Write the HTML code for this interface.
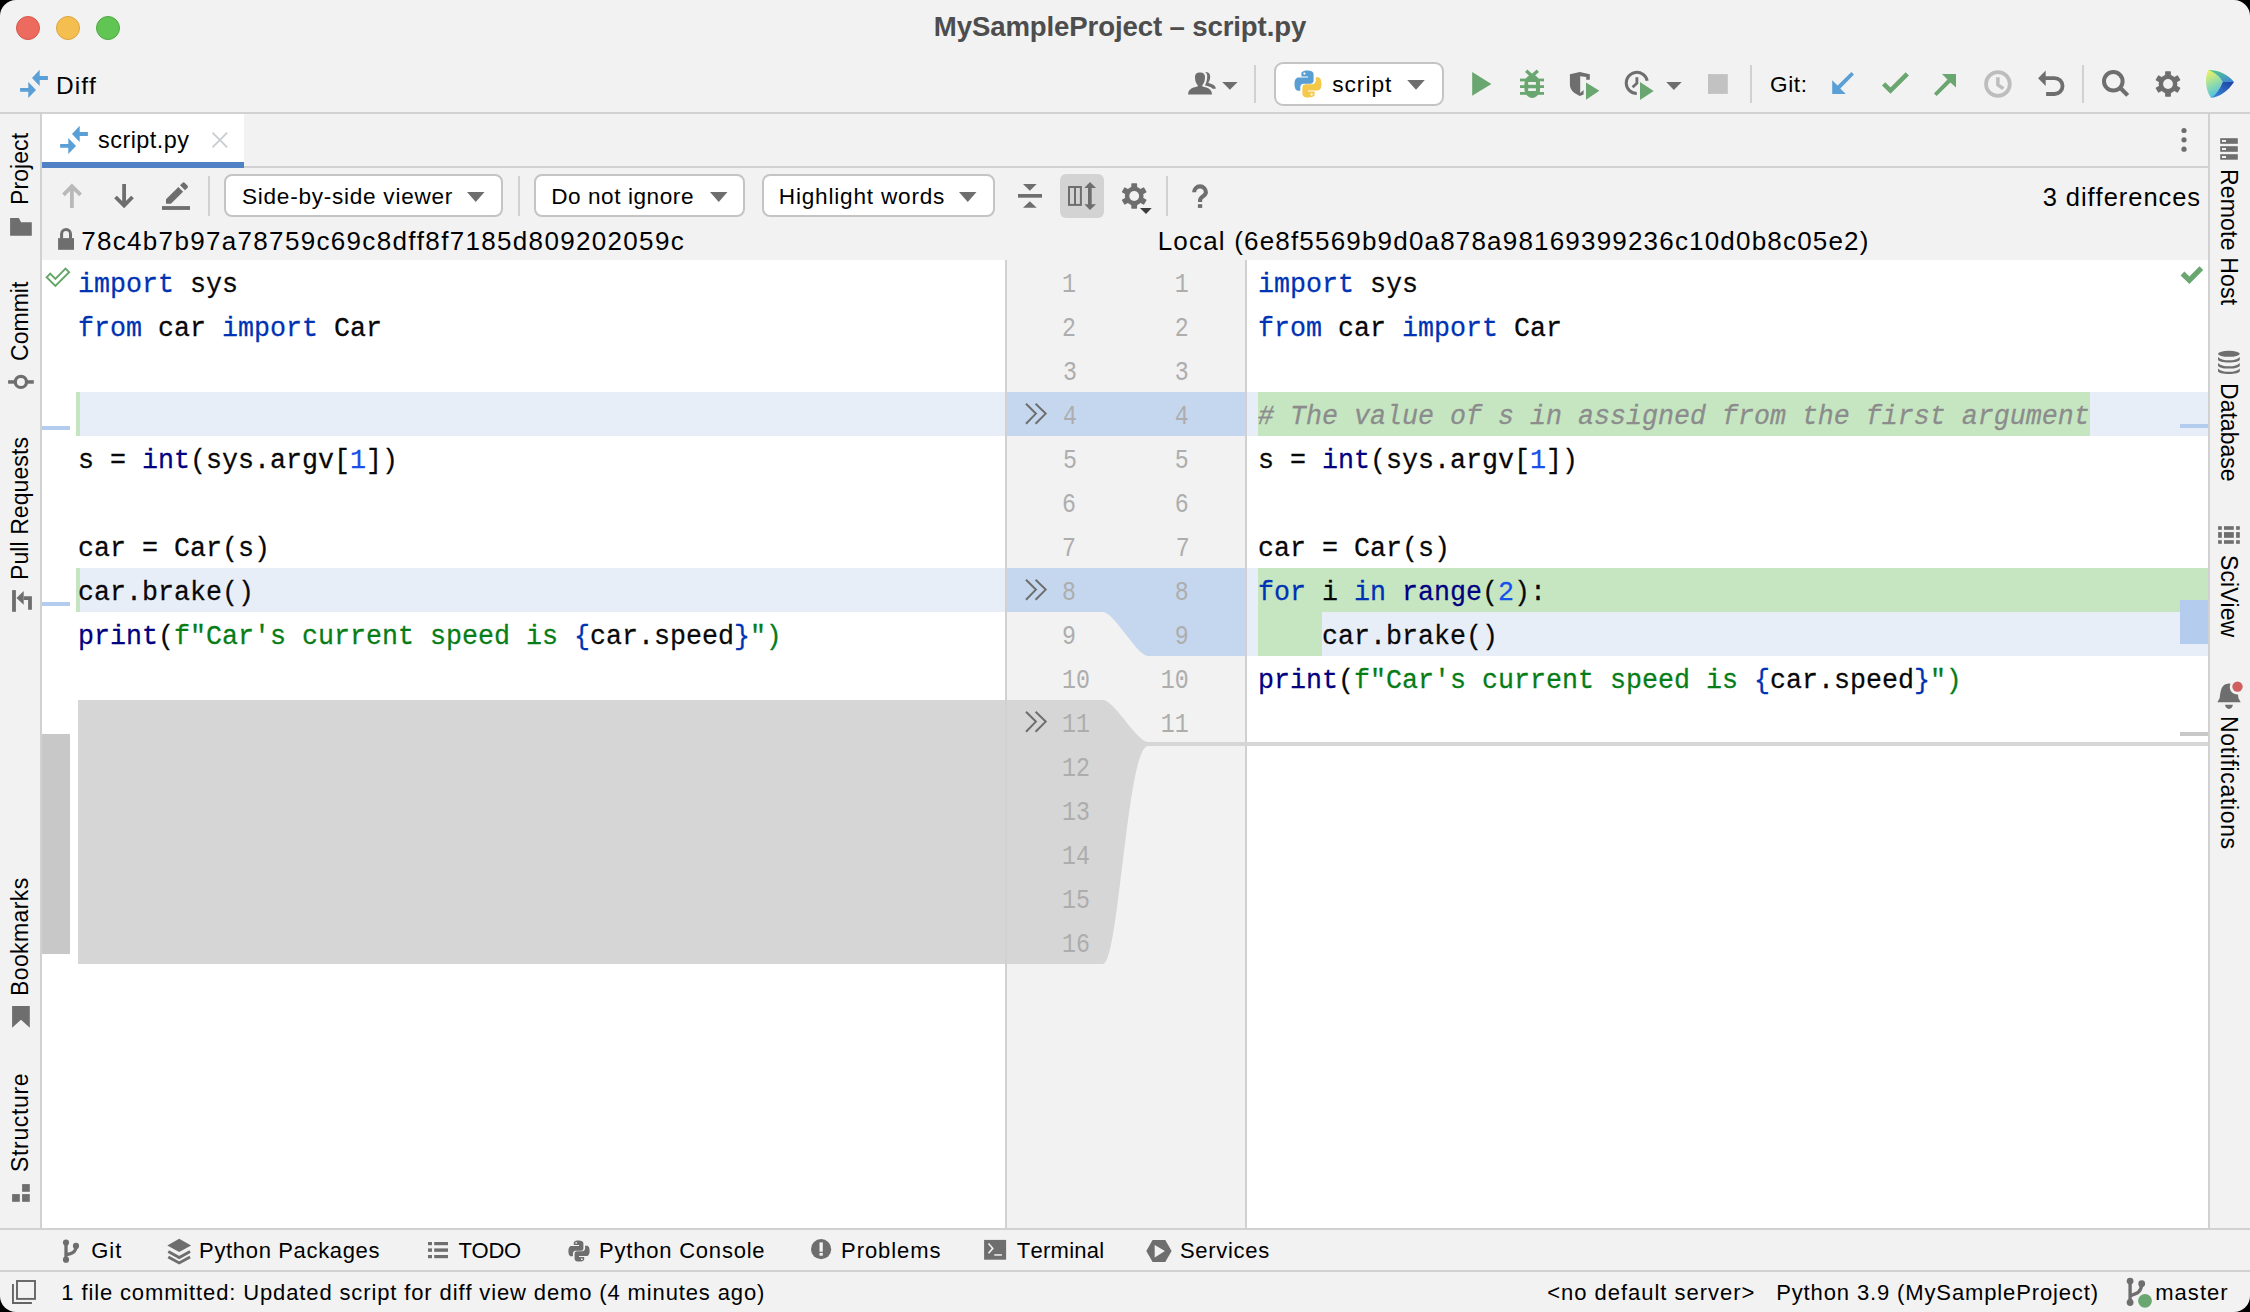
<!DOCTYPE html><html><head><meta charset="utf-8"><style>
html,body{margin:0;padding:0;background:#000;width:2250px;height:1312px;overflow:hidden}
#w{position:absolute;left:0;top:0;width:2250px;height:1312px;background:#f2f2f2;border-radius:16px;overflow:hidden}
.t{position:absolute;line-height:0;white-space:pre;font-family:"Liberation Sans",sans-serif;font-kerning:none;font-variant-ligatures:none}
.r{position:absolute}
.code{transform:scaleY(1.05);transform-origin:0 7.1px;-webkit-text-stroke:0.25px currentColor}
</style></head><body><div id="w">
<svg class="r" style="left:15px;top:15px" width="26" height="26" viewBox="0 0 26 26"><circle cx="13" cy="13" r="11.5" fill="#ed6a5e" stroke="#d4574b" stroke-width="1"/></svg>
<svg class="r" style="left:55px;top:15px" width="26" height="26" viewBox="0 0 26 26"><circle cx="13" cy="13" r="11.5" fill="#f5bf4f" stroke="#d9a540" stroke-width="1"/></svg>
<svg class="r" style="left:95px;top:15px" width="26" height="26" viewBox="0 0 26 26"><circle cx="13" cy="13" r="11.5" fill="#61c554" stroke="#4fa843" stroke-width="1"/></svg>
<div class="t" style="left:933.85px;top:27.00px;font-size:27.6px;color:#4d4d4d;font-weight:700;letter-spacing:-0.127px;">MySampleProject – script.py</div>
<div class="r" style="left:0px;top:112px;width:2250px;height:2px;background:#d1d1d1;"></div>
<div class="t" style="left:55.99px;top:86.00px;font-size:24.5px;color:#000;letter-spacing:1.008px;">Diff</div>
<div class="t" style="left:1769.96px;top:85.00px;font-size:22.6px;color:#000;letter-spacing:0.647px;">Git:</div>
<div class="r" style="left:1274px;top:62px;width:166px;height:40px;border:2px solid #c4c4c4;border-radius:9px;background:#fff"></div>
<div class="t" style="left:1332.17px;top:84.00px;font-size:22.8px;color:#000;letter-spacing:0.946px;">script</div>
<div class="r" style="left:40px;top:114px;width:2px;height:1114px;background:#d1d1d1;"></div>
<div class="r" style="left:2208px;top:114px;width:2px;height:1114px;background:#d1d1d1;"></div>
<div class="r" style="left:42px;top:114px;width:202px;height:52px;background:#fff;"></div>
<div class="r" style="left:42px;top:166px;width:2166px;height:2px;background:#d1d1d1;"></div>
<div class="r" style="left:42px;top:162px;width:202px;height:6px;background:#4f81c4;"></div>
<div class="t" style="left:98.05px;top:140.00px;font-size:23.4px;color:#000;letter-spacing:0.484px;">script.py</div>
<div class="r" style="left:224px;top:174px;width:275px;height:39px;border:2px solid #c4c4c4;border-radius:8px;background:#fff"></div>
<div class="t" style="left:241.97px;top:197.00px;font-size:22.6px;color:#000;letter-spacing:0.734px;">Side-by-side viewer</div>
<div class="r" style="left:534px;top:174px;width:207px;height:39px;border:2px solid #c4c4c4;border-radius:8px;background:#fff"></div>
<div class="t" style="left:551.15px;top:197.00px;font-size:22.6px;color:#000;letter-spacing:0.556px;">Do not ignore</div>
<div class="r" style="left:762px;top:174px;width:229px;height:39px;border:2px solid #c4c4c4;border-radius:8px;background:#fff"></div>
<div class="t" style="left:778.85px;top:197.00px;font-size:22.6px;color:#000;letter-spacing:0.791px;">Highlight words</div>
<div class="t" style="left:2042.63px;top:197.00px;font-size:25.5px;color:#000;letter-spacing:0.958px;">3 differences</div>
<div class="t" style="left:81.17px;top:241.00px;font-size:26px;color:#000;letter-spacing:1.325px;">78c4b7b97a78759c69c8dff8f7185d809202059c</div>
<div class="t" style="left:1157.67px;top:241.00px;font-size:26px;color:#000;letter-spacing:1.187px;">Local (6e8f5569b9d0a878a98169399236c10d0b8c05e2)</div>
<div class="r" style="left:42px;top:260px;width:963px;height:968px;background:#fff;"></div>
<div class="r" style="left:1005px;top:260px;width:2px;height:968px;background:#d1d1d1;"></div>
<div class="r" style="left:1007px;top:260px;width:238px;height:968px;background:#f2f2f2;"></div>
<div class="r" style="left:1245px;top:260px;width:2px;height:968px;background:#d1d1d1;"></div>
<div class="r" style="left:1247px;top:260px;width:961px;height:968px;background:#fff;"></div>
<div class="r" style="left:0px;top:1228px;width:2250px;height:2px;background:#d1d1d1;"></div>
<div class="r" style="left:0px;top:1270px;width:2250px;height:2px;background:#d1d1d1;"></div>
<div class="t" style="left:91.29px;top:1251.00px;font-size:22px;color:#000;letter-spacing:0.978px;">Git</div>
<div class="t" style="left:199.10px;top:1251.00px;font-size:22px;color:#000;letter-spacing:0.656px;">Python Packages</div>
<div class="t" style="left:458.51px;top:1251.00px;font-size:22px;color:#000;letter-spacing:-0.335px;">TODO</div>
<div class="t" style="left:599.10px;top:1251.00px;font-size:22px;color:#000;letter-spacing:0.782px;">Python Console</div>
<div class="t" style="left:841.10px;top:1251.00px;font-size:22px;color:#000;letter-spacing:0.911px;">Problems</div>
<div class="t" style="left:1016.81px;top:1251.00px;font-size:22px;color:#000;letter-spacing:0.256px;">Terminal</div>
<div class="t" style="left:1180.00px;top:1251.00px;font-size:22px;color:#000;letter-spacing:0.691px;">Services</div>
<div class="t" style="left:61.32px;top:1293.00px;font-size:22px;color:#000;letter-spacing:0.870px;">1 file committed: Updated script for diff view demo (4 minutes ago)</div>
<div class="t" style="left:1547.22px;top:1293.00px;font-size:22px;color:#000;letter-spacing:0.977px;">&lt;no default server&gt;</div>
<div class="t" style="left:1776.20px;top:1293.00px;font-size:22px;color:#000;letter-spacing:0.871px;">Python 3.9 (MySampleProject)</div>
<div class="t" style="left:2155.24px;top:1293.00px;font-size:22px;color:#000;letter-spacing:1.038px;">master</div>
<div class="t" style="left:20.23px;top:204.89px;transform:rotate(-90deg);transform-origin:0 0;font-size:23px;color:#000;letter-spacing:0.079px;">Project</div>
<div class="t" style="left:20.23px;top:361.17px;transform:rotate(-90deg);transform-origin:0 0;font-size:23px;color:#000;letter-spacing:0.023px;">Commit</div>
<div class="t" style="left:20.23px;top:580.39px;transform:rotate(-90deg);transform-origin:0 0;font-size:23px;color:#000;letter-spacing:0.084px;">Pull Requests</div>
<div class="t" style="left:20.23px;top:996.39px;transform:rotate(-90deg);transform-origin:0 0;font-size:23px;color:#000;letter-spacing:0.398px;">Bookmarks</div>
<div class="t" style="left:20.23px;top:1171.64px;transform:rotate(-90deg);transform-origin:0 0;font-size:23px;color:#000;letter-spacing:0.669px;">Structure</div>
<div class="t" style="left:2229.37px;top:169.41px;transform:rotate(90deg);transform-origin:0 0;font-size:23px;color:#000;letter-spacing:0.184px;">Remote Host</div>
<div class="t" style="left:2229.37px;top:383.31px;transform:rotate(90deg);transform-origin:0 0;font-size:23px;color:#000;letter-spacing:0.022px;">Database</div>
<div class="t" style="left:2229.37px;top:555.46px;transform:rotate(90deg);transform-origin:0 0;font-size:23px;color:#000;letter-spacing:0.064px;">SciView</div>
<div class="t" style="left:2229.37px;top:715.51px;transform:rotate(90deg);transform-origin:0 0;font-size:23px;color:#000;letter-spacing:0.653px;">Notifications</div>
<div class="r" style="left:80px;top:392px;width:925px;height:44px;background:#e8eef8;"></div>
<div class="r" style="left:76px;top:392px;width:4px;height:44px;background:#c5e5c0;"></div>
<div class="r" style="left:80px;top:568px;width:925px;height:44px;background:#e8eef8;"></div>
<div class="r" style="left:76px;top:568px;width:4px;height:44px;background:#c5e5c0;"></div>
<div class="r" style="left:78px;top:700px;width:927px;height:264px;background:#d6d6d6;"></div>
<div class="r" style="left:42px;top:734px;width:28px;height:220px;background:#c8c8c8;"></div>
<div class="r" style="left:42px;top:426px;width:28px;height:4px;background:#b4cdee;"></div>
<div class="r" style="left:42px;top:602px;width:28px;height:4px;background:#b4cdee;"></div>
<svg class="r" style="left:1007px;top:380px" width="238" height="600" viewBox="0 0 238 600">
<rect x="0" y="12" width="238" height="44" fill="#c5d7ef"/>
<path d="M0 188 H238 V276 H141 C130 276 107 232 96 232 H0 Z" fill="#c5d7ef"/>
<path d="M-2 320 H96 C107 320 130 362 141 362 V366 C120 366 112 584 96 584 H-2 Z" fill="#d6d6d6"/>
</svg>
<div class="r" style="left:1247px;top:392px;width:961px;height:44px;background:#e8eef8;"></div>
<div class="r" style="left:1258px;top:392px;width:832px;height:44px;background:#c6e6c2;"></div>
<div class="r" style="left:1247px;top:568px;width:961px;height:88px;background:#e8eef8;"></div>
<div class="r" style="left:1258px;top:568px;width:950px;height:44px;background:#c6e6c2;"></div>
<div class="r" style="left:1258px;top:612px;width:64px;height:44px;background:#c6e6c2;"></div>
<div class="r" style="left:1148px;top:742px;width:1060px;height:4px;background:#d6d6d6;"></div>
<div class="r" style="left:2180px;top:424px;width:28px;height:4px;background:#b4cdee;"></div>
<div class="r" style="left:2180px;top:600px;width:28px;height:44px;background:#b4cdee;"></div>
<div class="r" style="left:2180px;top:732px;width:28px;height:4px;background:#c8c8c8;"></div>
<div class="t code" style="left:78px;top:285.00px;font-family:'Liberation Mono', monospace;font-size:26.67px"><span style="color:#0033b3;">import</span><span style="color:#080808;"> sys</span></div>
<div class="t code" style="left:78px;top:329.00px;font-family:'Liberation Mono', monospace;font-size:26.67px"><span style="color:#0033b3;">from</span><span style="color:#080808;"> car </span><span style="color:#0033b3;">import</span><span style="color:#080808;"> Car</span></div>
<div class="t code" style="left:78px;top:461.00px;font-family:'Liberation Mono', monospace;font-size:26.67px"><span style="color:#080808;">s = </span><span style="color:#000080;">int</span><span style="color:#080808;">(sys.argv[</span><span style="color:#1750eb;">1</span><span style="color:#080808;">])</span></div>
<div class="t code" style="left:78px;top:549.00px;font-family:'Liberation Mono', monospace;font-size:26.67px"><span style="color:#080808;">car = Car(s)</span></div>
<div class="t code" style="left:78px;top:593.00px;font-family:'Liberation Mono', monospace;font-size:26.67px"><span style="color:#080808;">car.brake()</span></div>
<div class="t code" style="left:78px;top:637.00px;font-family:'Liberation Mono', monospace;font-size:26.67px"><span style="color:#000080;">print</span><span style="color:#080808;">(</span><span style="color:#067d17;">f"Car's current speed is </span><span style="color:#0033b3;">{</span><span style="color:#080808;">car.speed</span><span style="color:#0033b3;">}</span><span style="color:#067d17;">")</span></div>
<div class="t code" style="left:1258px;top:285.00px;font-family:'Liberation Mono', monospace;font-size:26.67px"><span style="color:#0033b3;">import</span><span style="color:#080808;"> sys</span></div>
<div class="t code" style="left:1258px;top:329.00px;font-family:'Liberation Mono', monospace;font-size:26.67px"><span style="color:#0033b3;">from</span><span style="color:#080808;"> car </span><span style="color:#0033b3;">import</span><span style="color:#080808;"> Car</span></div>
<div class="t code" style="left:1258px;top:417.00px;font-family:'Liberation Mono', monospace;font-size:26.67px"><span style="color:#8c8c8c;font-style:italic"># The value of s in assigned from the first argument</span></div>
<div class="t code" style="left:1258px;top:461.00px;font-family:'Liberation Mono', monospace;font-size:26.67px"><span style="color:#080808;">s = </span><span style="color:#000080;">int</span><span style="color:#080808;">(sys.argv[</span><span style="color:#1750eb;">1</span><span style="color:#080808;">])</span></div>
<div class="t code" style="left:1258px;top:549.00px;font-family:'Liberation Mono', monospace;font-size:26.67px"><span style="color:#080808;">car = Car(s)</span></div>
<div class="t code" style="left:1258px;top:593.00px;font-family:'Liberation Mono', monospace;font-size:26.67px"><span style="color:#0033b3;">for</span><span style="color:#080808;"> i </span><span style="color:#0033b3;">in</span><span style="color:#080808;"> </span><span style="color:#000080;">range</span><span style="color:#080808;">(</span><span style="color:#1750eb;">2</span><span style="color:#080808;">):</span></div>
<div class="t code" style="left:1258px;top:637.00px;font-family:'Liberation Mono', monospace;font-size:26.67px"><span style="color:#080808;">    car.brake()</span></div>
<div class="t code" style="left:1258px;top:681.00px;font-family:'Liberation Mono', monospace;font-size:26.67px"><span style="color:#000080;">print</span><span style="color:#080808;">(</span><span style="color:#067d17;">f"Car's current speed is </span><span style="color:#0033b3;">{</span><span style="color:#080808;">car.speed</span><span style="color:#0033b3;">}</span><span style="color:#067d17;">")</span></div>
<div class="t" style="left:1062.32px;top:285.00px;font-family:'Liberation Mono', monospace;font-size:28px;color:#adadad;transform:scaleX(0.83);transform-origin:0 0">1</div>
<div class="t" style="left:1062.37px;top:329.00px;font-family:'Liberation Mono', monospace;font-size:28px;color:#adadad;transform:scaleX(0.83);transform-origin:0 0">2</div>
<div class="t" style="left:1062.55px;top:373.00px;font-family:'Liberation Mono', monospace;font-size:28px;color:#adadad;transform:scaleX(0.83);transform-origin:0 0">3</div>
<div class="t" style="left:1062.83px;top:417.00px;font-family:'Liberation Mono', monospace;font-size:28px;color:#adadad;transform:scaleX(0.83);transform-origin:0 0">4</div>
<div class="t" style="left:1062.55px;top:461.00px;font-family:'Liberation Mono', monospace;font-size:28px;color:#adadad;transform:scaleX(0.83);transform-origin:0 0">5</div>
<div class="t" style="left:1062.29px;top:505.00px;font-family:'Liberation Mono', monospace;font-size:28px;color:#adadad;transform:scaleX(0.83);transform-origin:0 0">6</div>
<div class="t" style="left:1062.21px;top:549.00px;font-family:'Liberation Mono', monospace;font-size:28px;color:#adadad;transform:scaleX(0.83);transform-origin:0 0">7</div>
<div class="t" style="left:1062.49px;top:593.00px;font-family:'Liberation Mono', monospace;font-size:28px;color:#adadad;transform:scaleX(0.83);transform-origin:0 0">8</div>
<div class="t" style="left:1062.40px;top:637.00px;font-family:'Liberation Mono', monospace;font-size:28px;color:#adadad;transform:scaleX(0.83);transform-origin:0 0">9</div>
<div class="t" style="left:1062.32px;top:681.00px;font-family:'Liberation Mono', monospace;font-size:28px;color:#adadad;transform:scaleX(0.83);transform-origin:0 0">10</div>
<div class="t" style="left:1062.32px;top:725.00px;font-family:'Liberation Mono', monospace;font-size:28px;color:#adadad;transform:scaleX(0.83);transform-origin:0 0">11</div>
<div class="t" style="left:1062.32px;top:769.00px;font-family:'Liberation Mono', monospace;font-size:28px;color:#adadad;transform:scaleX(0.83);transform-origin:0 0">12</div>
<div class="t" style="left:1062.32px;top:813.00px;font-family:'Liberation Mono', monospace;font-size:28px;color:#adadad;transform:scaleX(0.83);transform-origin:0 0">13</div>
<div class="t" style="left:1062.32px;top:857.00px;font-family:'Liberation Mono', monospace;font-size:28px;color:#adadad;transform:scaleX(0.83);transform-origin:0 0">14</div>
<div class="t" style="left:1062.32px;top:901.00px;font-family:'Liberation Mono', monospace;font-size:28px;color:#adadad;transform:scaleX(0.83);transform-origin:0 0">15</div>
<div class="t" style="left:1062.32px;top:945.00px;font-family:'Liberation Mono', monospace;font-size:28px;color:#adadad;transform:scaleX(0.83);transform-origin:0 0">16</div>
<div class="t" style="left:1171.82px;top:285.00px;font-family:'Liberation Mono', monospace;font-size:28px;color:#adadad;transform:scaleX(0.83);transform-origin:100% 0">1</div>
<div class="t" style="left:1172.34px;top:329.00px;font-family:'Liberation Mono', monospace;font-size:28px;color:#adadad;transform:scaleX(0.83);transform-origin:100% 0">2</div>
<div class="t" style="left:1172.17px;top:373.00px;font-family:'Liberation Mono', monospace;font-size:28px;color:#adadad;transform:scaleX(0.83);transform-origin:100% 0">3</div>
<div class="t" style="left:1171.88px;top:417.00px;font-family:'Liberation Mono', monospace;font-size:28px;color:#adadad;transform:scaleX(0.83);transform-origin:100% 0">4</div>
<div class="t" style="left:1172.17px;top:461.00px;font-family:'Liberation Mono', monospace;font-size:28px;color:#adadad;transform:scaleX(0.83);transform-origin:100% 0">5</div>
<div class="t" style="left:1172.21px;top:505.00px;font-family:'Liberation Mono', monospace;font-size:28px;color:#adadad;transform:scaleX(0.83);transform-origin:100% 0">6</div>
<div class="t" style="left:1172.51px;top:549.00px;font-family:'Liberation Mono', monospace;font-size:28px;color:#adadad;transform:scaleX(0.83);transform-origin:100% 0">7</div>
<div class="t" style="left:1172.23px;top:593.00px;font-family:'Liberation Mono', monospace;font-size:28px;color:#adadad;transform:scaleX(0.83);transform-origin:100% 0">8</div>
<div class="t" style="left:1172.31px;top:637.00px;font-family:'Liberation Mono', monospace;font-size:28px;color:#adadad;transform:scaleX(0.83);transform-origin:100% 0">9</div>
<div class="t" style="left:1155.32px;top:681.00px;font-family:'Liberation Mono', monospace;font-size:28px;color:#adadad;transform:scaleX(0.83);transform-origin:100% 0">10</div>
<div class="t" style="left:1155.02px;top:725.00px;font-family:'Liberation Mono', monospace;font-size:28px;color:#adadad;transform:scaleX(0.83);transform-origin:100% 0">11</div>
<svg class="r" style="left:15px;top:66px;overflow:visible" width="36" height="36"><path fill="#5a9fd5" d="M17 11.9 L24.7 3.8 V10 H32.9 V13.9 H24.7 V19.9 Z M21 23.9 L13.3 15.9 V22 H5.1 V25.8 H13.3 V32 Z"/></svg>
<svg class="r" style="left:55px;top:122px;overflow:visible" width="36" height="36"><path fill="#5a9fd5" d="M17 11.9 L24.7 3.8 V10 H32.9 V13.9 H24.7 V19.9 Z M21 23.9 L13.3 15.9 V22 H5.1 V25.8 H13.3 V32 Z"/></svg>
<svg class="r" style="left:210px;top:130px;overflow:visible" width="20" height="20"><path d="M2.5 2.7 L17.2 17.3 M17.2 2.7 L2.5 17.3" stroke="#c9cdd0" stroke-width="1.8"/></svg>
<svg class="r" style="left:1180px;top:64px;overflow:visible" width="64" height="40"><g fill="#6e6e6e">
<path d="M8.1 30.6 C8.1 25.5 12 23.5 17.5 22.6 L17.8 21.2 C15.6 19.2 15 16 15 13 C15 9.7 17 8.4 20 8.4 C23 8.4 25 9.7 25 13 C25 16 24.4 19.2 22.2 21.2 L22.5 22.6 C28 23.5 32 25.5 32 30.6 Z"/>
<path d="M25 8.1 C28 8 30.2 9.5 30.2 12.5 C30.2 15 29.6 17 28.4 18.3 L28.6 19 C32.6 20 35.8 21.6 35.8 24.7 L32.6 24.7 C31.2 23.2 28.5 22.3 25 21.6 C26.6 18.2 27.2 15 27.2 12 C27.2 10.2 26.3 8.9 25 8.1 Z"/>
<path d="M42.2 18.1 H57.6 L49.9 25.8 Z"/></g></svg>
<div class="r" style="left:1254px;top:65px;width:2px;height:38px;background:#d1d1d1;"></div>
<div class="r" style="left:1750px;top:65px;width:2px;height:38px;background:#d1d1d1;"></div>
<div class="r" style="left:2082px;top:65px;width:2px;height:38px;background:#d1d1d1;"></div>
<svg class="r" style="left:1294px;top:70px;overflow:visible" width="28" height="28"><path fill="#5a9fd4" d="M13.8 0.5 C7 0.5 7.4 3.4 7.4 3.4 V6.5 H14 V7.5 H4.6 C4.6 7.5 0.5 7 0.5 14 C0.5 21 4 20.7 4 20.7 H6.3 V17.4 C6.3 17.4 6.2 13.8 9.8 13.8 H16.2 C16.2 13.8 19.6 13.9 19.6 10.5 V4.6 C19.6 4.6 20.1 0.5 13.8 0.5 Z"/>
<path fill="#f4c949" d="M14.2 27.5 C21 27.5 20.6 24.6 20.6 24.6 V21.5 H14 V20.5 H23.4 C23.4 20.5 27.5 21 27.5 14 C27.5 7 24 7.3 24 7.3 H21.7 V10.6 C21.7 10.6 21.8 14.2 18.2 14.2 H11.8 C11.8 14.2 8.4 14.1 8.4 17.5 V23.4 C8.4 23.4 7.9 27.5 14.2 27.5 Z"/>
<circle cx="10.4" cy="3.6" r="1.1" fill="#fff"/><circle cx="17.6" cy="24.4" r="1.1" fill="#fff"/></svg>
<svg class="r" style="left:1407px;top:80px;overflow:visible" width="18" height="10"><path fill="#6e6e6e" d="M0.2 0 H17.8 L9 9.8 Z"/></svg>
<svg class="r" style="left:1465px;top:64px;overflow:visible" width="30" height="40"><path fill="#6aa66f" d="M7.2 8.1 L26.4 19.9 L7.2 31.7 Z"/></svg>
<svg class="r" style="left:1465px;top:64px;overflow:visible" width="90" height="40"><g fill="#6aa66f">
<path d="M61.2 6.7 L67 12 L72.8 6.7" stroke="#6aa66f" stroke-width="3.3" fill="none"/>
<ellipse cx="67.2" cy="22.3" rx="8.5" ry="11.6"/>
<rect x="55" y="14.6" width="24" height="2.8"/><rect x="55" y="21.2" width="24" height="2.8"/><rect x="55" y="28" width="24" height="2.8"/>
</g>
<rect x="63.2" y="18" width="7.7" height="2.8" fill="#f2f2f2"/><rect x="63.2" y="24.3" width="7.7" height="2.7" fill="#f2f2f2"/>
<rect x="58.5" y="17.4" width="0.9" height="3.8" fill="#f2f2f2"/><rect x="75.1" y="17.4" width="0.9" height="3.8" fill="#f2f2f2"/>
<rect x="58.5" y="24" width="0.9" height="4" fill="#f2f2f2"/><rect x="75.1" y="24" width="0.9" height="4" fill="#f2f2f2"/></svg>
<svg class="r" style="left:1465px;top:64px;overflow:visible" width="140" height="40"><path fill="#6e6e6e" d="M104.9 10.3 L114.8 8.1 L124.8 10.3 V15.8 H121.2 V13.1 L115.2 12.3 V29 L118.6 26.1 V30.5 L114.8 32 C110 29.8 104.9 26.5 104.9 20.5 Z"/>
<path fill="#6aa66f" d="M121 18.4 L134.4 26.8 L121 35.8 Z"/></svg>
<svg class="r" style="left:1615px;top:64px;overflow:visible" width="120" height="40"><path d="M32.2 16.8 A10.6 10.6 0 1 0 21.8 29.5" stroke="#6e6e6e" stroke-width="3" fill="none"/>
<path d="M21.9 13.3 V19.2 L17.6 23.3" stroke="#6e6e6e" stroke-width="2.8" fill="none"/>
<path fill="#6aa66f" d="M25 18.1 L38.7 26.9 L25 36 Z"/>
<path fill="#6e6e6e" d="M51.2 18.1 H66.7 L58.9 25.9 Z"/>
<rect x="93" y="10.1" width="19.8" height="19.8" fill="#c2c2c2"/></svg>
<svg class="r" style="left:1825px;top:64px;overflow:visible" width="140" height="40"><path fill="#5a9fd5" d="M7.2 16.2 L12.6 21.6 L26.4 8.1 L29 10.6 L15.3 24.4 L20.8 29.9 H7.2 Z"/>
<path d="M58.6 19.8 L65.5 26.6 L82.3 9.8" stroke="#6aa66f" stroke-width="4.6" fill="none"/>
<path fill="#6aa66f" d="M117 10 H131 V23.6 L125.4 18.4 L111.7 32 L108.9 29.4 L122.5 15.6 Z"/></svg>
<svg class="r" style="left:1975px;top:64px;overflow:visible" width="100" height="40"><circle cx="22.9" cy="20" r="11.9" stroke="#bdbdbd" stroke-width="3.7" fill="none"/>
<path d="M22.9 13.3 V20.9 L28.4 24.6" stroke="#bdbdbd" stroke-width="3.5" fill="none"/>
<path fill="#6e6e6e" d="M63.1 14.2 L70.7 6.4 V22 Z"/>
<path d="M70 14.1 H79.6 A7.95 7.95 0 0 1 79.6 30 H71.1" stroke="#6e6e6e" stroke-width="3.8" fill="none"/></svg>
<svg class="r" style="left:2095px;top:64px;overflow:visible" width="150" height="40"><circle cx="18.3" cy="17.3" r="9.3" stroke="#6e6e6e" stroke-width="4" fill="none"/>
<path d="M25.6 24.2 L32.7 31.4" stroke="#6e6e6e" stroke-width="4.2" fill="none"/>
<g transform="translate(73,20) scale(1)"><g fill="#6e6e6e"><circle r="9.4"/><rect x="-2.9" y="-12.8" width="5.8" height="6" rx="0.7" transform="rotate(0)"/><rect x="-2.9" y="-12.8" width="5.8" height="6" rx="0.7" transform="rotate(60)"/><rect x="-2.9" y="-12.8" width="5.8" height="6" rx="0.7" transform="rotate(120)"/><rect x="-2.9" y="-12.8" width="5.8" height="6" rx="0.7" transform="rotate(180)"/><rect x="-2.9" y="-12.8" width="5.8" height="6" rx="0.7" transform="rotate(240)"/><rect x="-2.9" y="-12.8" width="5.8" height="6" rx="0.7" transform="rotate(300)"/></g><circle r="4.9" fill="#f2f2f2"/></g>
<defs><linearGradient id="lg1" x1="0" y1="0" x2="0.3" y2="1"><stop offset="0" stop-color="#fbf35a"/><stop offset="0.5" stop-color="#9fe0a0"/><stop offset="1" stop-color="#4fc3e0"/></linearGradient>
<linearGradient id="lg2" x1="0" y1="0" x2="1" y2="1"><stop offset="0" stop-color="#58d27a"/><stop offset="1" stop-color="#3b82e0"/></linearGradient>
<linearGradient id="lg3" x1="0" y1="1" x2="1" y2="0"><stop offset="0" stop-color="#3a90e0"/><stop offset="1" stop-color="#1f3fa0"/></linearGradient></defs>
<path fill="url(#lg1)" d="M113.3 6 C120 8.5 125 12.5 127.7 18 C125.5 24 121.5 30 116 34 C112.5 29 111 23 111 17 C111 13 111.8 9 113.3 6 Z"/>
<path fill="url(#lg2)" d="M113.3 6 C124 6 133 10.5 139 18 H127.7 C125 12.5 120 8.5 113.3 6 Z"/>
<path fill="url(#lg3)" d="M139 18 C133.5 26.5 125 33 116 34 C121.5 30 125.5 24 127.7 18 Z"/></svg>
<svg class="r" style="left:55px;top:175px;overflow:visible" width="160" height="42"><path d="M16.9 33 V10.5 M8.5 19.9 L16.9 11.2 L25.6 19.9" stroke="#b9b9b9" stroke-width="3.8" fill="none"/>
<path d="M69.1 8.9 V30.5 M60.5 22 L69.1 30.5 L77.5 22" stroke="#6e6e6e" stroke-width="3.8" fill="none"/>
<g fill="#6e6e6e"><rect x="107" y="31.1" width="28" height="3.8"/>
<path d="M111 28.8 V24.2 L123.4 12.1 L128.1 16.8 L115.9 28.8 Z"/>
<path d="M125 10.3 L127.6 7.7 Q128.6 6.9 129.6 7.7 L132.6 10.7 Q133.4 11.7 132.6 12.7 L130 15.2 Z"/></g></svg>
<div class="r" style="left:208px;top:176px;width:2px;height:40px;background:#d1d1d1;"></div>
<div class="r" style="left:518px;top:176px;width:2px;height:40px;background:#d1d1d1;"></div>
<div class="r" style="left:1166px;top:176px;width:2px;height:40px;background:#d1d1d1;"></div>
<svg class="r" style="left:467.3px;top:192px;overflow:visible" width="18" height="11"><path fill="#6e6e6e" d="M0 0 H17.5 L8.75 10 Z"/></svg>
<svg class="r" style="left:709.7px;top:192px;overflow:visible" width="18" height="11"><path fill="#6e6e6e" d="M0 0 H17.5 L8.75 10 Z"/></svg>
<svg class="r" style="left:958.7px;top:192px;overflow:visible" width="18" height="11"><path fill="#6e6e6e" d="M0 0 H17.5 L8.75 10 Z"/></svg>
<svg class="r" style="left:1010px;top:172px;overflow:visible" width="150" height="48"><g fill="#6e6e6e"><path d="M13 12 H26.7 L19.85 18.7 Z"/><rect x="8" y="22" width="24" height="3.7"/><path d="M19.85 29.3 L26.7 35.7 H13 Z"/></g>
<rect x="50" y="2" width="44" height="44" rx="6" fill="#d3d3d3"/>
<rect x="59" y="15" width="11.9" height="17.9" stroke="#6e6e6e" stroke-width="2" fill="none"/><rect x="64" y="15" width="2" height="18" fill="#6e6e6e"/>
<g fill="#6e6e6e"><rect x="78" y="15" width="3.7" height="18"/><path d="M74.3 16 L80 10 L86 16 Z"/><path d="M74.3 32.3 H86 L80 38 Z"/></g>
<g transform="translate(124.2,24) scale(1)"><g fill="#6e6e6e"><circle r="9.4"/><rect x="-2.9" y="-12.8" width="5.8" height="6" rx="0.7" transform="rotate(0)"/><rect x="-2.9" y="-12.8" width="5.8" height="6" rx="0.7" transform="rotate(60)"/><rect x="-2.9" y="-12.8" width="5.8" height="6" rx="0.7" transform="rotate(120)"/><rect x="-2.9" y="-12.8" width="5.8" height="6" rx="0.7" transform="rotate(180)"/><rect x="-2.9" y="-12.8" width="5.8" height="6" rx="0.7" transform="rotate(240)"/><rect x="-2.9" y="-12.8" width="5.8" height="6" rx="0.7" transform="rotate(300)"/></g><circle r="4.9" fill="#f2f2f2"/></g>
<path fill="#3c3c3c" d="M130 36 H141.7 L136 42 Z"/></svg>
<svg class="r" style="left:1010px;top:172px;overflow:visible" width="210" height="48"><path d="M184.1 20.3 A5.9 5.9 0 1 1 195.9 20.3 C195.9 24.2 190.1 24.6 190.1 28.2 V30" stroke="#6e6e6e" stroke-width="4.1" fill="none"/><rect x="187.9" y="32.2" width="4.3" height="3.7" fill="#6e6e6e"/></svg>
<svg class="r" style="left:42px;top:225px;overflow:visible" width="40" height="30"><rect x="16.1" y="13.1" width="15.9" height="11.7" fill="#6e6e6e"/><path d="M19.6 13.5 V9 A4.45 4.45 0 0 1 28.5 9 V13.5" stroke="#6e6e6e" stroke-width="3" fill="none"/></svg>
<svg class="r" style="left:42px;top:260px;overflow:visible" width="40" height="30"><path d="M4.6 17.3 L8.2 13.6 L13.4 18.8 L23.5 8.6 L27.1 12.2 L13.4 25.9 Z" stroke="#62a566" stroke-width="1.9" fill="none" stroke-linejoin="miter"/></svg>
<svg class="r" style="left:2170px;top:258px;overflow:visible" width="40" height="34"><path fill="#6aa66f" d="M10.6 17.4 L14.4 13.5 L19.4 18.5 L29.5 8.2 L33.2 11.9 L19.4 25.9 Z"/></svg>
<svg class="r" style="left:1015px;top:392px;overflow:visible" width="40" height="40"><path d="M11 11.7 L20.9 21.6 L11 31.8 M20.6 11.7 L30.7 21.6 L20.6 31.8" stroke="#6e6e6e" stroke-width="2" fill="none"/></svg>
<svg class="r" style="left:1015px;top:568px;overflow:visible" width="40" height="40"><path d="M11 11.7 L20.9 21.6 L11 31.8 M20.6 11.7 L30.7 21.6 L20.6 31.8" stroke="#6e6e6e" stroke-width="2" fill="none"/></svg>
<svg class="r" style="left:1015px;top:700px;overflow:visible" width="40" height="40"><path d="M11 11.7 L20.9 21.6 L11 31.8 M20.6 11.7 L30.7 21.6 L20.6 31.8" stroke="#6e6e6e" stroke-width="2" fill="none"/></svg>
<svg class="r" style="left:5px;top:210px;overflow:visible" width="35" height="35"><path fill="#6e6e6e" d="M5.1 8.1 H13.9 L16 12.3 H26.8 V25.7 H5.1 Z"/></svg>
<svg class="r" style="left:3px;top:365px;overflow:visible" width="37" height="35"><circle cx="17.9" cy="16.9" r="5.6" stroke="#6e6e6e" stroke-width="3.2" fill="none"/><rect x="5.1" y="15.2" width="7.4" height="3.5" fill="#6e6e6e"/><rect x="23.3" y="15.2" width="7.5" height="3.5" fill="#6e6e6e"/></svg>
<svg class="r" style="left:3px;top:583px;overflow:visible" width="37" height="35"><g fill="#6e6e6e"><rect x="9.1" y="7.1" width="3.8" height="21.7"/><path d="M13.5 14.9 L20.7 8 V21.7 Z"/><path d="M20.7 13.2 H28.9 V26.7 H25.1 V17.1 H20.7 Z"/></g></svg>
<svg class="r" style="left:3px;top:1000px;overflow:visible" width="37" height="35"><path fill="#6e6e6e" d="M9.1 6.1 H26.8 V27.7 L18 19.7 L9.1 27.7 Z"/></svg>
<svg class="r" style="left:3px;top:1175px;overflow:visible" width="37" height="35"><g fill="#6e6e6e"><rect x="19.1" y="9.1" width="7.7" height="7.7"/><rect x="9.1" y="19.1" width="7.7" height="7.7"/><rect x="19.1" y="19.1" width="7.7" height="7.7"/></g></svg>
<svg class="r" style="left:2212px;top:132px;overflow:visible" width="34" height="34"><g fill="#6e6e6e"><rect x="8.2" y="6.2" width="17.6" height="5.6"/><rect x="8.2" y="14.2" width="17.6" height="5.6"/><rect x="8.2" y="22.2" width="17.6" height="5.5"/></g><g fill="#f2f2f2"><rect x="10" y="8" width="4" height="2"/><rect x="10" y="16" width="4" height="2"/><rect x="10" y="24" width="4" height="2"/></g></svg>
<svg class="r" style="left:2212px;top:345px;overflow:visible" width="34" height="35"><g fill="#6e6e6e"><ellipse cx="16.9" cy="8.8" rx="10.9" ry="3"/>
<path d="M6 12 C8 14.5 12 15.3 16.9 15.3 C21.8 15.3 25.8 14.5 27.8 12 V14.6 C27.8 16.6 22.9 17.6 16.9 17.6 C10.9 17.6 6 16.6 6 14.6 Z"/>
<path d="M6 17.9 C8 20.4 12 21.2 16.9 21.2 C21.8 21.2 25.8 20.4 27.8 17.9 V20.4 C27.8 22.4 22.9 23.5 16.9 23.5 C10.9 23.5 6 22.4 6 20.4 Z"/>
<path d="M6 23.4 C8 25.9 12 26.7 16.9 26.7 C21.8 26.7 25.8 25.9 27.8 23.4 V26.1 C27.8 28.1 22.9 29.1 16.9 29.1 C10.9 29.1 6 28.1 6 26.1 Z"/></g></svg>
<svg class="r" style="left:2212px;top:518px;overflow:visible" width="34" height="34"><g fill="#6e6e6e"><rect x="6.1" y="8.2" width="3.7" height="3.6"/><rect x="6.1" y="14.1" width="3.7" height="5.7"/><rect x="6.1" y="22.2" width="3.7" height="3.6"/><rect x="12" y="8.2" width="9.8" height="3.6"/><rect x="12" y="14.1" width="9.8" height="5.7"/><rect x="12" y="22.2" width="9.8" height="3.6"/><rect x="24.1" y="8.2" width="3.7" height="3.6"/><rect x="24.1" y="14.1" width="3.7" height="5.7"/><rect x="24.1" y="22.2" width="3.7" height="3.6"/></g></svg>
<svg class="r" style="left:2210.8px;top:675px;overflow:visible" width="34" height="36"><path fill="#6e6e6e" d="M6.4 27.3 L8.7 23 C9.5 18 9.5 8.6 18 8.6 L19.5 8.7 C19 10 18.8 11 18.8 12 C18.8 16.5 22.5 19.8 27 19.4 L27.4 23 L29.7 27.3 Z"/>
<path fill="#6e6e6e" d="M14 29.7 H21.9 C21.5 32 20 33.9 18 33.9 C16 33.9 14.4 32 14 29.7 Z"/>
<circle cx="26.5" cy="11.6" r="5.2" fill="#d0605f"/></svg>
<svg class="r" style="left:55px;top:1232px;overflow:visible" width="150" height="36"><g fill="#6e6e6e"><circle cx="11" cy="10.6" r="3.1"/><circle cx="21" cy="13.9" r="3.1"/><circle cx="11" cy="27.7" r="3.1"/></g>
<path d="M11 10.6 V27.7 M21 14 C21 19 19 21.5 11 22.7" stroke="#6e6e6e" stroke-width="3.3" fill="none"/>
<path fill="#6e6e6e" d="M112.3 13.5 L124.2 6.8 L136.1 13.5 L124.2 20 Z"/>
<path d="M113.3 19.6 L124.2 25.6 L135.1 19.6 M113.3 25 L124.2 31 L135.1 25" stroke="#6e6e6e" stroke-width="2.8" fill="none"/></svg>
<svg class="r" style="left:420px;top:1234px;overflow:visible" width="180" height="32"><g fill="#6e6e6e"><rect x="8" y="8" width="4" height="3.2"/><rect x="8" y="14.4" width="4" height="3.4"/><rect x="8" y="21" width="4" height="3.2"/>
<rect x="14.2" y="8" width="13.8" height="3.2"/><rect x="14.2" y="14.4" width="13.8" height="3.4"/><rect x="14.2" y="21" width="13.8" height="3.2"/></g></svg>
<svg class="r" style="left:568px;top:1240px;overflow:visible" width="22" height="22"><g transform="scale(0.786)"><path fill="#6e6e6e" d="M13.8 0.5 C7 0.5 7.4 3.4 7.4 3.4 V6.5 H14 V7.5 H4.6 C4.6 7.5 0.5 7 0.5 14 C0.5 21 4 20.7 4 20.7 H6.3 V17.4 C6.3 17.4 6.2 13.8 9.8 13.8 H16.2 C16.2 13.8 19.6 13.9 19.6 10.5 V4.6 C19.6 4.6 20.1 0.5 13.8 0.5 Z"/>
<path fill="#6e6e6e" d="M14.2 27.5 C21 27.5 20.6 24.6 20.6 24.6 V21.5 H14 V20.5 H23.4 C23.4 20.5 27.5 21 27.5 14 C27.5 7 24 7.3 24 7.3 H21.7 V10.6 C21.7 10.6 21.8 14.2 18.2 14.2 H11.8 C11.8 14.2 8.4 14.1 8.4 17.5 V23.4 C8.4 23.4 7.9 27.5 14.2 27.5 Z"/>
<circle cx="10.4" cy="3.6" r="1.1" fill="#f2f2f2"/><circle cx="17.6" cy="24.4" r="1.1" fill="#f2f2f2"/></g></svg>
<svg class="r" style="left:800px;top:1234px;overflow:visible" width="380" height="32"><circle cx="21.1" cy="15.2" r="10.1" fill="#6e6e6e"/><rect x="19.5" y="8.4" width="3.3" height="9.3" fill="#f2f2f2"/><rect x="19.5" y="18.9" width="3.3" height="2.8" fill="#f2f2f2"/>
<rect x="184.1" y="5.9" width="22" height="19.8" fill="#6e6e6e"/><path d="M188.5 9.5 L192.8 14.4 L188.5 19.3" stroke="#f2f2f2" stroke-width="1.6" fill="none"/><rect x="194.3" y="20.2" width="7.6" height="1.5" fill="#f2f2f2"/>
<path fill="#6e6e6e" d="M352.6 5.9 H365.3 L371.6 16.9 L365.3 27.9 H352.6 L346.3 16.9 Z"/><path fill="#f2f2f2" d="M354.7 11 L364.9 16.9 L354.7 23.6 Z"/></svg>
<svg class="r" style="left:5px;top:1274px;overflow:visible" width="40" height="36"><rect x="12" y="7" width="18" height="17.9" stroke="#646464" stroke-width="1.9" fill="none"/><path d="M7.95 10 V28.95 H26.9" stroke="#646464" stroke-width="1.9" fill="none"/></svg>
<svg class="r" style="left:2115px;top:1272px;overflow:visible" width="45" height="40"><g fill="#6e6e6e"><circle cx="15.1" cy="9.1" r="3.4"/><circle cx="26.7" cy="11.7" r="3.4"/><circle cx="15.1" cy="30.5" r="3.4"/></g>
<path d="M15.1 9 V30.5 M26.5 12 C26.5 19.5 23 21.5 15.1 23.8" stroke="#6e6e6e" stroke-width="3.4" fill="none"/>
<circle cx="30" cy="28.8" r="6.9" fill="#6aa66f"/></svg>
<svg class="r" style="left:2174px;top:120px;overflow:visible" width="20" height="40"><g fill="#6e6e6e"><circle cx="10" cy="10.5" r="2.6"/><circle cx="10" cy="19.8" r="2.6"/><circle cx="10" cy="29.2" r="2.6"/></g></svg>
</div></body></html>
